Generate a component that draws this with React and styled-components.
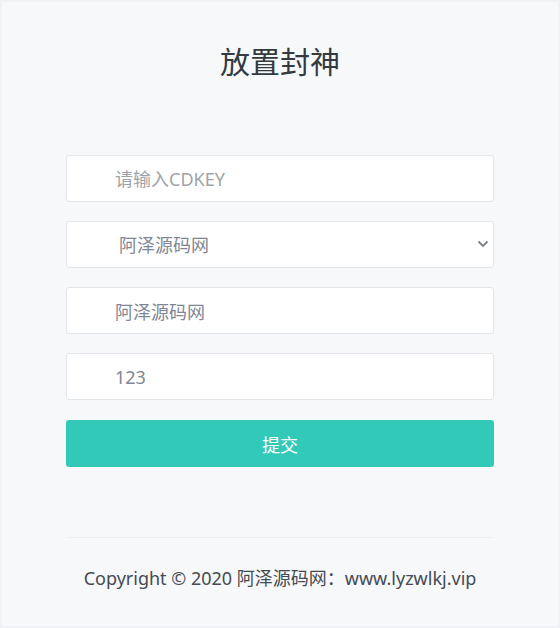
import React from "react";
import styled, { createGlobalStyle } from "styled-components";

const GlobalStyle = createGlobalStyle`
  html, body {
    margin: 0;
    padding: 0;
    background: #f7f8fa;
  }
  * { box-sizing: border-box; }
`;

const Page = styled.div`
  width: 560px;
  height: 628px;
  border: 2px solid #f0f2f5;
  background: #f7f8fa;
  font-family: "Noto Sans", "Noto Sans CJK SC", sans-serif;
  display: flex;
  flex-direction: column;
  align-items: center;
`;

const Title = styled.h1`
  margin: 37px 0 0;
  font-size: 30px;
  font-weight: 400;
  line-height: 46px;
  color: #333a40;
`;

const Form = styled.form`
  width: 428px;
  margin-top: 70px;
  display: flex;
  flex-direction: column;
  gap: 19px;
`;

const Field = styled.input`
  width: 100%;
  height: 47px;
  padding: 0 0 0 48px;
  border: 1px solid #e3e6ea;
  border-radius: 3px;
  background: #fff;
  font-family: inherit;
  font-size: 18px;
  color: #7f8794;
  outline: none;
  &::placeholder {
    color: #a0a4a8;
  }
`;

const SelectWrap = styled.div`
  position: relative;
`;

const Select = styled.select`
  width: 100%;
  height: 47px;
  padding: 0 0 0 52px;
  border: 1px solid #e3e6ea;
  border-radius: 3px;
  background: #fff;
  font-family: inherit;
  font-size: 18px;
  color: #7f8794;
  appearance: none;
  outline: none;
`;

const Chevron = styled.svg`
  position: absolute;
  right: 5px;
  top: 19px;
  pointer-events: none;
`;

const Submit = styled.button`
  width: 100%;
  height: 47px;
  margin-top: 1px;
  border: none;
  border-radius: 3px;
  background: #33c9b9;
  color: #fff;
  font-family: inherit;
  font-size: 18px;
`;

const Footer = styled.footer`
  width: 428px;
  margin-top: 70px;
  border-top: 1px solid #eceef1;
  padding-top: 26px;
  text-align: center;
  font-size: 18px;
  color: #454b52;
`;

const App = () => {
  return (
    <>
      <GlobalStyle />
      <Page>
        <Title>放置封神</Title>
        <Form onSubmit={(e) => e.preventDefault()}>
          <Field placeholder="请输入CDKEY" />
          <SelectWrap>
            <Select defaultValue="1">
              <option value="1">阿泽源码网</option>
            </Select>
            <Chevron width="12" height="8" viewBox="0 0 12 8">
              <path d="M1.5 1.5 L6 6 L10.5 1.5" fill="none" stroke="#7a808a" strokeWidth="1.8" />
            </Chevron>
          </SelectWrap>
          <Field defaultValue="阿泽源码网" />
          <Field defaultValue="123" />
          <Submit type="submit">提交</Submit>
        </Form>
        <Footer>Copyright © 2020 阿泽源码网：www.lyzwlkj.vip</Footer>
      </Page>
    </>
  );
};

export default App;
